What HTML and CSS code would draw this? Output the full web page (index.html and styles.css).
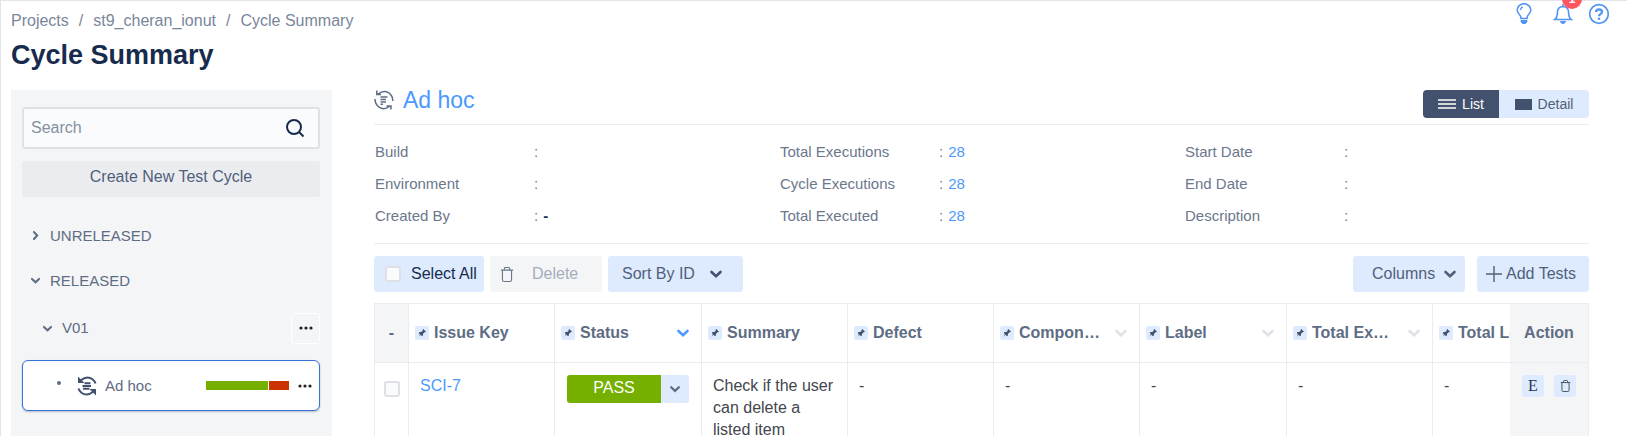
FILE: index.html
```html
<!DOCTYPE html>
<html lang="en">
<head>
<meta charset="utf-8">
<title>Cycle Summary</title>
<link rel="stylesheet" href="styles.css">
</head>
<body>
<svg class="defs" aria-hidden="true">
  <symbol id="chevron" viewBox="0 0 14 14"><path d="M2.5 5 7 9.2 11.5 5" fill="none" stroke="currentColor" stroke-width="2.6" stroke-linecap="round"/></symbol>
  <symbol id="pin" viewBox="0 0 14 14"><path d="M8.3 3 11 5.7 10 6.3 9.2 6.4 7.9 8 7.9 9.4 7 10.2 5.5 8.8 3.2 10.9 5 8.2 3.7 6.9 4.6 6.1 6.1 6.1 7.6 4.9 7.6 3.8Z" fill="currentColor"/></symbol>
  <symbol id="trash" viewBox="0 0 16 18"><path d="M1 4h14M5 4V2.2Q5 1 6.2 1h3.6Q11 1 11 2.2V4M2.8 4v11.2Q2.8 17 4.6 17h6.8q1.8 0 1.8-1.800V4" fill="none" stroke="currentColor" stroke-width="1.300"/></symbol>
  <symbol id="cycle" viewBox="0 0 20 20"><g fill="none" stroke="currentColor"><path d="M4 4Q9.500-.2 14.800 2.800Q18.800 5.500 18.800 11M15.500 16.500Q10 20.500 5 17.200Q1 14 1 9M2.800 .5V4.500H7M17 19.500V16H12.500"/><path d="M6.500 7h7M6.500 9.500h5.500M6.500 12h5.500M6.500 14.200h2.500"/></g></symbol>
  <symbol id="cycle-bold" viewBox="0 0 20 20"><g fill="none" stroke="currentColor" stroke-width="2"><path d="M3.500 4.500Q10-.8 15.500 3.200Q17.800 5 18.500 7.500M16.500 15.500Q10 20.800 4.500 16.800Q2.200 15 1.500 12.500"/><path d="M7.500 7.200h6M5.500 10h8.500M6 12.800h6.500"/></g><path d="M1 .5v6.500h6.500ZM19 19.500v-6.500h-6.500Z" fill="currentColor"/></symbol>
  <symbol id="dots" viewBox="0 0 14 4"><circle cx="2" cy="2" r="1.600"/><circle cx="7" cy="2" r="1.600"/><circle cx="12" cy="2" r="1.600"/></symbol>
</svg>
<div class="page">
  <header class="top">
    <div>
      <nav class="crumbs" aria-label="Breadcrumb"><a href="#">Projects</a><span>/</span><a href="#">st9_cheran_ionut</a><span>/</span><a href="#">Cycle Summary</a></nav>
      <h1>Cycle Summary</h1>
    </div>
    <div class="tools">
      <button type="button" aria-label="Tips"><svg width="16" height="22" viewBox="0 0 16 22" fill="none" stroke="currentColor" stroke-width="1.600"><path d="M5 15.500Q5 13 3 11Q1.200 9 1.200 7A6.500 6 0 0 1 14.800 7Q14.800 9 13 11Q11 13 11 15.500Z"/><path d="M4.500 7Q4.800 4.500 7 4.200" stroke-width="1.200"/><path d="M5 17.500h6v1l-1.500 2h-3l-1.500-2Z" fill="currentColor" stroke-width="1"/></svg></button>
      <button type="button" aria-label="Notifications" class="bell"><svg width="20" height="22" viewBox="0 0 20 22" fill="none" stroke="currentColor" stroke-width="1.600"><path d="M1.800 16.500Q4.500 14.500 4.500 8.500Q5 3.800 10 3.500Q15 3.800 15.500 8.500Q15.500 14.500 18.200 16.500ZM10 1v2.500"/><path d="M7.500 18.500h5Q12 20.500 10 20.500T7.500 18.500Z" fill="currentColor" stroke-width="1"/></svg><span class="badge">1</span></button>
      <button type="button" aria-label="Help" class="help"><svg width="22" height="22" viewBox="0 0 22 22" fill="none" stroke="currentColor"><circle cx="11" cy="11" r="9.300" stroke-width="1.700"/><path d="M8 9Q8 6.300 11 6.300Q14 6.400 14 8.800Q14 10.300 12.300 11.200Q11 11.800 11 13.200" stroke-width="2.200"/><circle cx="11" cy="15.800" r="1.300" fill="currentColor" stroke="none"/></svg></button>
    </div>
  </header>

  <div class="body">
    <aside class="side">
      <div class="search">
        <input type="text" placeholder="Search" aria-label="Search">
        <svg width="20" height="20" viewBox="0 0 20 20" fill="none" stroke="currentColor" stroke-width="2"><circle cx="9" cy="9" r="7"/><path d="m14 14 4.500 4.500"/></svg>
      </div>
      <button type="button" class="create">Create New Test Cycle</button>
      <ul class="tree">
        <li class="node"><svg class="chev right"><use href="#chevron"/></svg>UNRELEASED</li>
        <li class="node"><svg class="chev"><use href="#chevron"/></svg>RELEASED</li>
        <li class="node version"><svg class="chev"><use href="#chevron"/></svg>V01<button type="button" class="more" aria-label="Version menu"><svg width="14" height="4"><use href="#dots"/></svg></button></li>
        <li class="cycle"><span class="bullet"></span><svg class="cycle-icon" width="20" height="20"><use href="#cycle-bold"/></svg><span>Ad hoc</span><span class="bar"><i class="ok"></i><i class="bad"></i></span><button type="button" class="menu" aria-label="Cycle menu"><svg width="14" height="4"><use href="#dots"/></svg></button></li>
      </ul>
    </aside>

    <main class="main">
      <div class="heading">
        <h2><svg width="20" height="20"><use href="#cycle"/></svg>Ad hoc</h2>
        <div class="toggle">
          <button type="button" class="on"><svg width="18" height="10" viewBox="0 0 18 10" stroke="currentColor"><path d="M0 1h18M0 5h18M0 9h18" stroke-width="1.300"/></svg>List</button>
          <button type="button"><svg width="17" height="11"><rect width="17" height="11" fill="#42526e"/></svg>Detail</button>
        </div>
      </div>
      <div class="details">
        <dl><dt>Build</dt><dd>:</dd><dt>Environment</dt><dd>:</dd><dt>Created By</dt><dd>:<b>-</b></dd></dl>
        <dl><dt>Total Executions</dt><dd>:<a href="#">28</a></dd><dt>Cycle Executions</dt><dd>:<a href="#">28</a></dd><dt>Total Executed</dt><dd>:<a href="#">28</a></dd></dl>
        <dl><dt>Start Date</dt><dd>:</dd><dt>End Date</dt><dd>:</dd><dt>Description</dt><dd>:</dd></dl>
      </div>
      <div class="actions">
        <label class="btn select"><input type="checkbox">Select All</label>
        <button type="button" class="btn delete" disabled><svg width="14" height="17"><use href="#trash"/></svg>Delete</button>
        <button type="button" class="btn sort">Sort By ID<svg class="chev"><use href="#chevron"/></svg></button>
        <button type="button" class="btn columns">Columns<svg class="chev"><use href="#chevron"/></svg></button>
        <button type="button" class="btn add"><svg width="16" height="16" viewBox="0 0 16 16" stroke="currentColor" stroke-width="1.400"><path d="M8 0v16M0 8h16"/></svg>Add Tests</button>
      </div>
      <div class="scroller">
        <table>
          <colgroup><col class="c-check"><col class="c"><col class="c-wide"><col class="c"><col class="c"><col class="c"><col class="c-wide"><col class="c"><col class="c"><col class="c-action"></colgroup>
          <thead>
            <tr>
              <th class="check">-</th>
              <th><div class="head"><svg class="pin"><use href="#pin"/></svg><span>Issue Key</span></div></th>
              <th><div class="head"><svg class="pin"><use href="#pin"/></svg><span>Status</span><svg class="chev active"><use href="#chevron"/></svg></div></th>
              <th><div class="head"><svg class="pin"><use href="#pin"/></svg><span>Summary</span></div></th>
              <th><div class="head"><svg class="pin"><use href="#pin"/></svg><span>Defect</span></div></th>
              <th><div class="head"><svg class="pin"><use href="#pin"/></svg><span>Component</span><svg class="chev"><use href="#chevron"/></svg></div></th>
              <th><div class="head"><svg class="pin"><use href="#pin"/></svg><span>Label</span><svg class="chev"><use href="#chevron"/></svg></div></th>
              <th><div class="head"><svg class="pin"><use href="#pin"/></svg><span>Total Executions</span><svg class="chev"><use href="#chevron"/></svg></div></th>
              <th><div class="head"><svg class="pin"><use href="#pin"/></svg><span>Total Logged</span></div></th>
              <th class="action">Action</th>
            </tr>
          </thead>
          <tbody>
            <tr>
              <td class="check"><input type="checkbox" aria-label="Select SCI-7"></td>
              <td><a href="#">SCI-7</a></td>
              <td class="status"><div class="state"><span>PASS</span><button type="button" aria-label="Change status"><svg class="chev"><use href="#chevron"/></svg></button></div></td>
              <td>Check if the user can delete a listed item</td>
              <td>-</td><td>-</td><td>-</td><td>-</td><td>-</td>
              <td class="action"><div class="row-actions"><button type="button" class="exec" aria-label="Execute">E</button><button type="button" aria-label="Delete"><svg width="11" height="14"><use href="#trash"/></svg></button></div></td>
            </tr>
          </tbody>
        </table>
      </div>
    </main>
  </div>
</div>
</body>
</html>
```
FILE: styles.css
```css
* { box-sizing: border-box; }
html { overflow: hidden; }
body { margin: 0; background: #fff; color: #5e6c84; font: 16px/22px "Liberation Sans", Arial, sans-serif; }
button { font: inherit; color: inherit; border: 0; padding: 0; background: none; }
a { color: #4c9aff; text-decoration: none; }
h1, h2, dl, dd, ul { margin: 0; padding: 0; }
svg { flex: none; }
.defs { display: none; }
.chev { width: 14px; height: 14px; }

.page { min-height: 100vh; border: solid #e4e5e8; border-width: 1px 0 0 1px; padding: 0 38px 0 10px; }
.top { display: flex; justify-content: space-between; height: 89px; padding-top: 9px; }
.crumbs { display: flex; gap: 10px; }
.crumbs, .crumbs a { color: #7a869a; }
h1 { margin-top: 7px; color: #172b4d; font-size: 27px; line-height: 32px; }
.tools { display: flex; align-items: flex-start; gap: 21px; margin: -7px -21px 0 0; color: #5294f2; }
.tools svg { display: block; }
.tools .help { margin-left: -6px; }
.bell { position: relative; }
.badge { position: absolute; left: 9px; top: -14px; width: 20px; height: 20px; border-radius: 10px; background: #ff5660; color: #fff; font-size: 12px; font-weight: bold; line-height: 20px; }

.body { display: flex; gap: 42px; }
.side { flex: 0 0 321px; min-height: 346px; padding: 17px 12px 0 11px; background: #f4f5f7; }
.search { display: flex; align-items: center; height: 42px; padding: 0 13px 0 7px; border: 2px solid #dfe1e6; border-radius: 3px; background: #fafbfc; color: #172b4d; }
.search input { flex: 1; min-width: 0; border: 0; padding: 0; background: none; font: inherit; outline: 0; }
.search input::placeholder { color: #8590a2; opacity: 1; }
.create { display: block; width: 100%; height: 36px; margin-top: 12px; padding-bottom: 5px; border-radius: 3px; background: #ebecf0; color: #505f79; }
.tree { list-style: none; font-size: 15px; }
.node { display: flex; align-items: center; gap: 9px; height: 45px; padding-left: 8px; }
.node:first-child { margin-top: 16px; }
.node .chev { width: 11px; height: 11px; }
.right { transform: rotate(-90deg); }
.version { height: 50px; padding-left: 20px; }
.more { width: 29px; height: 31px; margin-left: auto; border: 1px solid #fff; border-radius: 3px; color: #172b4d; }
.more svg, .menu svg { display: block; margin: auto; fill: #222; }
.cycle { display: flex; align-items: center; height: 51px; margin-top: 7px; padding: 0 7px 0 34px; border: 1px solid #3572d8; border-radius: 6px; background: #fff; box-shadow: 0 1px 2px #b3bac5; }
.bullet { width: 4px; height: 4px; margin: 0 16px 6px 0; border-radius: 2px; background: #5e6c84; }
.cycle-icon { margin-right: 8px; color: #42526e; }
.bar { display: flex; gap: 1px; width: 83px; height: 9px; margin: 0 9px 0 auto; }
.ok { flex: 3; background: #75b000; }
.bad { flex: 1; background: #cc3300; }

.main { flex: 1; min-width: 0; }
.heading { display: flex; justify-content: space-between; height: 35px; border-bottom: 1px solid #ebecf0; }
h2 { display: flex; align-items: center; gap: 9px; height: 20px; color: #4c9aff; font-size: 23px; font-weight: normal; }
h2 svg { color: #5e6c84; stroke-width: 1.5; }
.toggle { display: flex; height: 28px; border-radius: 4px; overflow: hidden; background: #deebff; font-size: 14px; color: #505f79; }
.toggle button { display: flex; align-items: center; justify-content: center; gap: 6px; width: 90px; }
.toggle .on { width: 76px; background: #42526e; color: #fff; }
.details { display: grid; grid-template-columns: repeat(3, 1fr); padding: 11px 0; border-bottom: 1px solid #ebecf0; color: #6b778c; font-size: 15px; }
.details dl { display: grid; grid-template-columns: 159px 1fr; grid-auto-rows: 32px; align-items: center; padding-left: 1px; }
.details dd { display: flex; gap: 5px; }
.details b { color: #172b4d; }
.actions { display: flex; gap: 6px; padding: 12px 0 11px; }
.btn { display: flex; align-items: center; height: 36px; border-radius: 3px; background: #deebff; color: #505f79; }
input[type="checkbox"] { appearance: none; flex: none; width: 16px; height: 16px; margin: 0; border: 2px solid #dfe1e6; border-radius: 3px; background: #fafbfc; }
.select { width: 110px; gap: 10px; padding-left: 11px; color: #172b4d; }
.delete { width: 112px; gap: 18px; padding-left: 10px; background: #f4f5f7; color: #a5adba; }
.delete svg { color: #6b778c; }
.sort { width: 135px; gap: 14px; padding-left: 14px; }
.sort .chev { color: #42526e; }
.columns { width: 112px; gap: 8px; margin: 0 6px 0 auto; padding-left: 19px; }
.add { width: 112px; gap: 4px; padding-left: 9px; }

.scroller { overflow: hidden; border: solid #ebecf0; border-width: 1px 1px 0; }
table { width: 1282px; table-layout: fixed; border-spacing: 0; }
.c-check { width: 34px; }
.c { width: 146px; }
.c-wide { width: 147px; }
.c-action { width: 78px; }
th, td { border: solid #ebecf0; border-width: 0 1px 1px 0; text-align: left; }
th { height: 59px; padding: 0 0 0 6px; }
td { height: 90px; padding: 12px 8px 0 11px; vertical-align: top; color: #42464d; }
th.check { padding: 0; background: #f4f5f7; text-align: center; }
td.check { padding: 18px 0 0 9px; }
td.check input { display: block; }
.head { display: flex; align-items: center; padding-right: 11px; }
.head span { min-width: 0; margin: 0 11px 0 5px; overflow: hidden; text-overflow: ellipsis; white-space: nowrap; }
.head .chev { margin-left: auto; color: #dfe1e6; }
.head .active { color: #4c9aff; }
.pin { width: 14px; height: 14px; border-radius: 2px; background: #deebff; color: #42526e; }
td.status { padding-left: 12px; padding-right: 0; }
.state { display: flex; width: 122px; height: 28px; border-radius: 3px; overflow: hidden; background: #deebff; }
.state span { flex: 1; padding-bottom: 2px; background: #75b000; color: #fff; line-height: 25px; text-align: center; }
.state button { width: 28px; color: #5e6c84; }
.state svg { display: block; width: 12px; margin: auto; }
.action { position: sticky; right: 0; border-right: 0; background: #f4f5f7; }
th.action { padding: 0; text-align: center; }
td.action { padding: 12px 0 0 12px; }
.row-actions { display: flex; gap: 10px; }
.row-actions button { width: 22px; height: 22px; border-radius: 3px; background: #deebff; }
.row-actions svg { display: block; margin: auto; }
.row-actions .exec { color: #253858; font-family: "Liberation Serif", "Times New Roman", serif; }
```
